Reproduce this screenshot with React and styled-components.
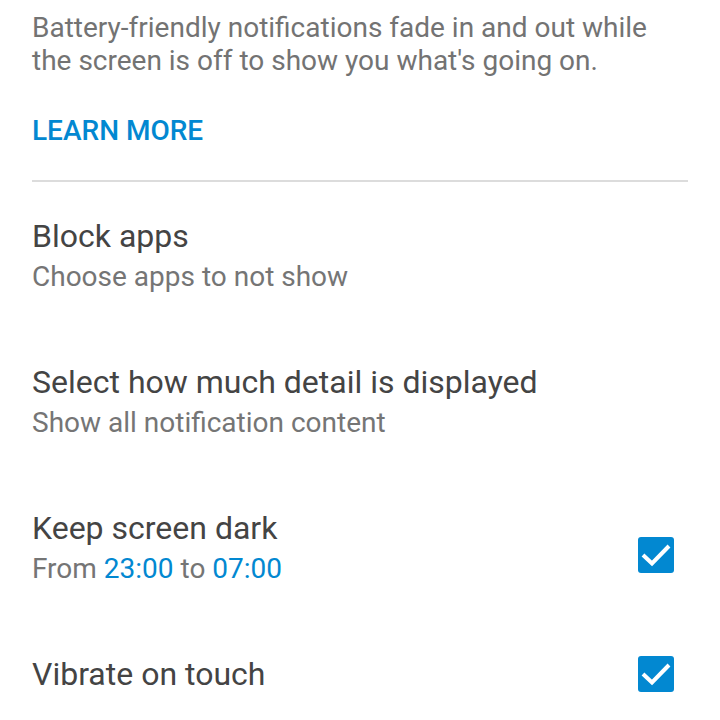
import styled, { createGlobalStyle } from 'styled-components';

const GlobalStyle = createGlobalStyle`
  body {
    margin: 0;
    background: #ffffff;
    font-family: Roboto, "Noto Sans", sans-serif;
  }
`;

const BLUE = '#0288d1';

const Page = styled.div`
  width: 720px;
  height: 720px;
  overflow: hidden;
  padding: 0 32px;
  box-sizing: border-box;
`;

const Intro = styled.p`
  margin: 0;
  padding-top: 11px;
  font-size: 28px;
  line-height: 33px;
  color: #737373;
`;

const LearnMore = styled.div`
  margin-top: 37px;
  font-size: 28px;
  line-height: 34px;
  font-weight: 500;
  color: ${BLUE};
`;

const Divider = styled.div`
  margin-top: 32px;
  height: 2px;
  background: #dcdcdc;
`;

const Row = styled.div`
  display: flex;
  align-items: center;
  justify-content: space-between;
  padding: 32px 0;
`;

const Texts = styled.div`
  display: flex;
  flex-direction: column;
`;

const Title = styled.div`
  font-size: 32px;
  line-height: 44px;
  color: #444444;
`;

const Subtitle = styled.div`
  font-size: 28px;
  line-height: 38px;
  color: #757575;
`;

const Accent = styled.span`
  color: ${BLUE};
`;

const Box = styled.div`
  width: 36px;
  height: 36px;
  margin-right: 14px;
  border-radius: 3px;
  background: ${BLUE};
  margin-top: ${(p) => p.$offset || 0}px;

  svg {
    display: block;
  }
`;

function Check({ offset }) {
  return (
    <Box $offset={offset}>
      <svg width="36" height="36" viewBox="0 0 36 36">
        <path d="M5 18l9 8.5L31 9" fill="none" stroke="#fff" strokeWidth="4" />
      </svg>
    </Box>
  );
}

export default function App() {
  return (
    <>
      <GlobalStyle />
      <Page>
        <Intro>
          Battery-friendly notifications fade in and out while the screen is off to show you what's going on.
        </Intro>
        <LearnMore>LEARN MORE</LearnMore>
        <Divider />
        <Row>
          <Texts>
            <Title>Block apps</Title>
            <Subtitle>Choose apps to not show</Subtitle>
          </Texts>
        </Row>
        <Row>
          <Texts>
            <Title>Select how much detail is displayed</Title>
            <Subtitle>Show all notification content</Subtitle>
          </Texts>
        </Row>
        <Row>
          <Texts>
            <Title>Keep screen dark</Title>
            <Subtitle>
              From <Accent>23:00</Accent> to <Accent>07:00</Accent>
            </Subtitle>
          </Texts>
          <Check offset={16} />
        </Row>
        <Row>
          <Texts>
            <Title>Vibrate on touch</Title>
          </Texts>
          <Check />
        </Row>
      </Page>
    </>
  );
}
